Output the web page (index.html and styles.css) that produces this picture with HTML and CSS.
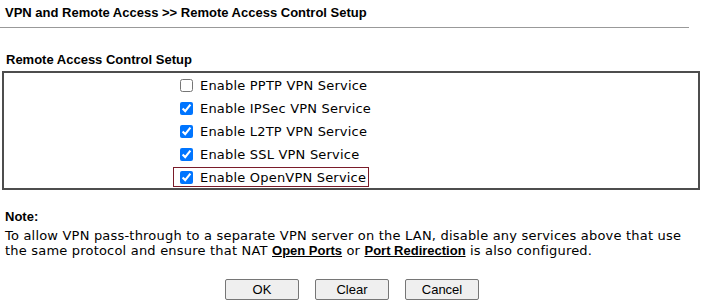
FILE: index.html
```html
<!DOCTYPE html>
<html lang="en">
<head>
  <meta charset="UTF-8">
  <title>Remote Access Control Setup</title>
  <link rel="stylesheet" href="styles.css">
</head>
<body>
  <div class="page-title">VPN and Remote Access &gt;&gt; Remote Access Control Setup</div>
  <hr class="title-line">

  <div class="section-title">Remote Access Control Setup</div>
  <div class="service-box">
    <ul class="service-list">
      <li><label><input type="checkbox"> Enable PPTP VPN Service</label></li>
      <li><label><input type="checkbox" checked> Enable IPSec VPN Service</label></li>
      <li><label><input type="checkbox" checked> Enable L2TP VPN Service</label></li>
      <li><label><input type="checkbox" checked> Enable SSL VPN Service</label></li>
      <li><label class="focused"><input type="checkbox" checked> Enable OpenVPN Service</label></li>
    </ul>
  </div>

  <div class="note">
    <div class="note-title">Note:</div>
    <p>To allow VPN pass-through to a separate VPN server on the LAN, disable any services above that use<br>
    the same protocol and ensure that NAT <a href="#">Open Ports</a> or <a href="#">Port Redirection</a> is also configured.</p>
  </div>

  <div class="buttons">
    <button>OK</button>
    <button>Clear</button>
    <button>Cancel</button>
  </div>
</body>
</html>
```

FILE: styles.css
```css
body {
  margin: 0;
  padding: 0 5px 0 2px;
  font-family: "Liberation Sans", Arial, sans-serif;
  font-size: 13px;
  color: #000;
  background: #fff;
}
.page-title {
  font-weight: bold;
  padding: 5px 0 0 3px;
  line-height: 15px;
}
.title-line {
  border: none;
  border-top: 1px solid #999;
  margin: 7px 11px 0 -2px;
}
.section-title {
  font-weight: bold;
  padding: 24px 0 0 4px;
  line-height: 16px;
}
.service-box {
  border: 2px solid #4d4d4d;
  margin-top: 3px;
  height: 115px;
}
.service-list {
  list-style: none;
  margin: 0;
  padding: 0 0 0 169px;
  font-family: "DejaVu Sans", Tahoma, sans-serif;
  font-size: 13px;
  letter-spacing: 0.2px;
}
.service-list li {
  height: 23px;
  display: flex;
  align-items: center;
}
.service-list label {
  display: flex;
  align-items: center;
  padding: 2px 2px 1px 1px;
  border: 1px solid transparent;
  line-height: 15px;
}
.service-list label.focused {
  border-color: #7a1c2a;
}
.service-list input {
  width: 13px;
  height: 13px;
  margin: 0 7px 0 5px;
  accent-color: #0075ff;
}
.note {
  padding: 19px 0 0 3px;
}
.note-title {
  font-weight: bold;
  line-height: 15px;
}
.note p {
  margin: 4px 0 0;
  font-family: "DejaVu Sans", Tahoma, sans-serif;
  font-size: 13px;
  letter-spacing: 0.2px;
  line-height: 15px;
}
.note a {
  color: #000;
  font-family: "Liberation Sans", Arial, sans-serif;
  font-weight: bold;
  letter-spacing: 0;
}
.buttons {
  display: flex;
  justify-content: center;
  gap: 16px;
  padding: 21px 0 0 0;
  margin-left: 2px;
}
.buttons button {
  width: 74px;
  height: 21px;
  font-family: "Liberation Sans", Arial, sans-serif;
  font-size: 13px;
  background: #efefef;
  border: 1px solid #767676;
  border-radius: 2px;
  padding: 0;
}
```
